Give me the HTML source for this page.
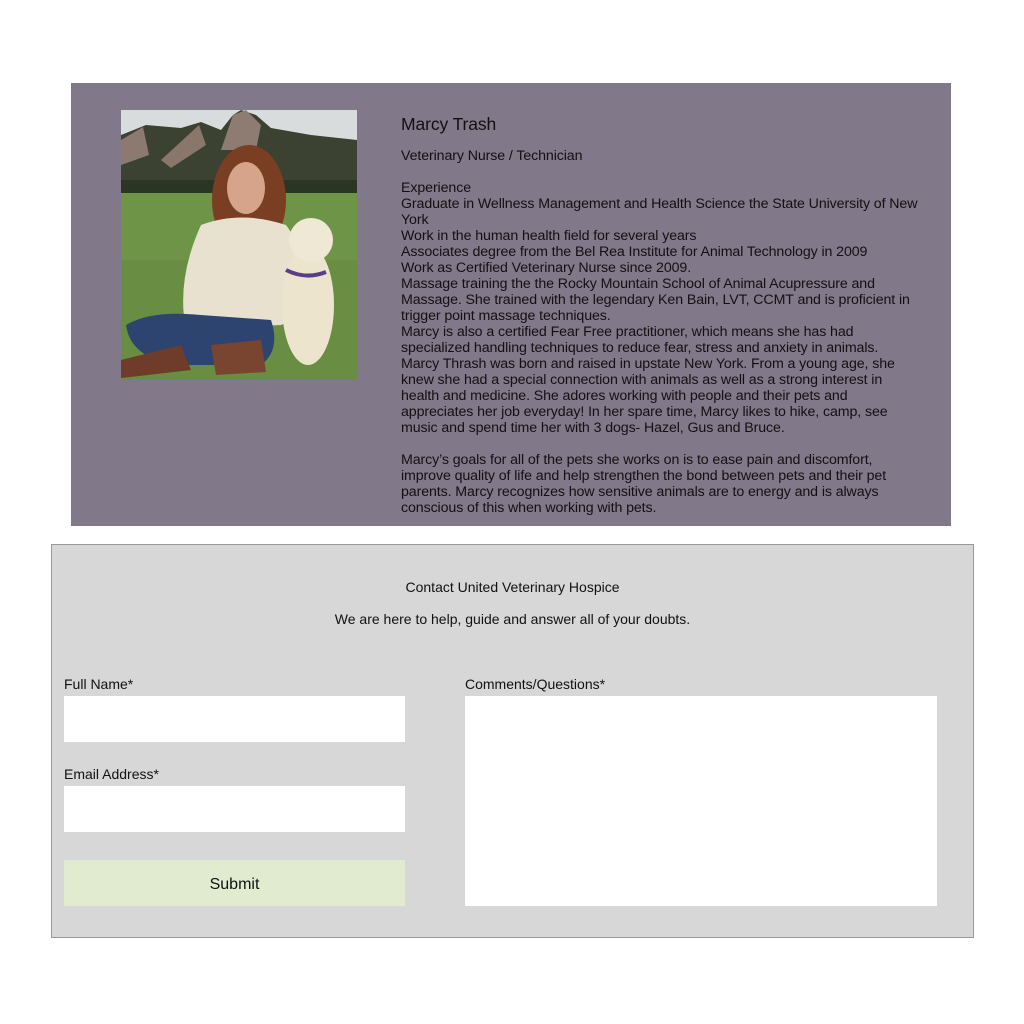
<!DOCTYPE html>
<html><head><meta charset="utf-8"><style>
body{margin:0;background:#fff;width:1024px;height:1024px;position:relative;font-family:"Liberation Sans",sans-serif;color:#111;}
.panel{position:absolute;left:71px;top:83px;width:880px;height:443px;background:#817889;}
.photo{position:absolute;left:50px;top:27px;width:236px;height:270px;}
.txt{position:absolute;left:330px;top:31px;font-size:14.2px;line-height:16px;white-space:nowrap;letter-spacing:-0.1px;}
.txt h1{font-size:17.5px;font-weight:normal;margin:0 0 14px;line-height:20px;}
.form{position:absolute;left:51px;top:544px;width:921px;height:392px;background:#d7d7d7;border:1px solid #999;}
.c{position:absolute;width:100%;text-align:center;font-size:14px;}
.lbl{position:absolute;font-size:14px;}
.in{position:absolute;background:#fff;}
.btn{position:absolute;left:12px;top:315px;width:341px;height:46px;background:#e0ebd0;text-align:center;line-height:50px;font-size:16px;}
</style></head><body>
<div class="panel">
<svg class="photo" viewBox="0 0 236 270" preserveAspectRatio="none">
<rect width="236" height="270" fill="#6f8a45"/>
<rect width="236" height="40" fill="#d8dcdc"/>
<polygon points="0,25 25,15 60,18 80,12 100,20 112,5 120,0 135,5 150,18 190,25 236,30 236,83 0,83" fill="#3b4232"/>
<polygon points="0,30 22,17 28,45 0,55" fill="#8c7a70"/>
<polygon points="40,50 78,15 85,35 50,58" fill="#8a776c"/>
<polygon points="100,40 112,5 125,0 140,15 135,40" fill="#8e7c72"/>
<rect y="70" width="236" height="13" fill="#2a3524"/>
<rect y="83" width="236" height="187" fill="#6e9448"/>
<rect y="150" width="236" height="120" fill="#668a40" opacity=".7"/>
<ellipse cx="128" cy="90" rx="37" ry="55" fill="#7a3e22"/>
<ellipse cx="125" cy="78" rx="19" ry="26" fill="#d6a48a"/>
<path d="M80,115 Q120,100 165,115 L210,180 L195,200 L160,215 L65,220 Q55,170 80,115Z" fill="#e9e1cf"/>
<path d="M5,215 Q30,200 80,205 L150,210 Q160,240 140,255 L60,255 Q10,250 5,215Z" fill="#2d4470"/>
<path d="M0,250 L60,235 L70,260 L0,268Z" fill="#6e3c28"/>
<path d="M90,235 L140,230 L145,262 L95,265Z" fill="#7a4530"/>
<ellipse cx="187" cy="195" rx="26" ry="60" fill="#ece4cc"/>
<ellipse cx="190" cy="130" rx="22" ry="22" fill="#efe8d4"/>
<path d="M165,160 Q185,170 205,162" stroke="#5a3e8a" stroke-width="4" fill="none"/>
</svg>
<div class="txt"><h1>Marcy Trash</h1>Veterinary Nurse / Technician<br><br>Experience<br>Graduate in Wellness Management and Health Science the State University of New<br>York<br>Work in the human health field for several years<br>Associates degree from the Bel Rea Institute for Animal Technology in 2009<br>Work as Certified Veterinary Nurse since 2009.<br>Massage training the the Rocky Mountain School of Animal Acupressure and<br>Massage. She trained with the legendary Ken Bain, LVT, CCMT and is proficient in<br>trigger point massage techniques.<br>Marcy is also a certified Fear Free practitioner, which means she has had<br>specialized handling techniques to reduce fear, stress and anxiety in animals.<br>Marcy Thrash was born and raised in upstate New York. From a young age, she<br>knew she had a special connection with animals as well as a strong interest in<br>health and medicine. She adores working with people and their pets and<br>appreciates her job everyday! In her spare time, Marcy likes to hike, camp, see<br>music and spend time her with 3 dogs- Hazel, Gus and Bruce.<br><br>Marcy’s goals for all of the pets she works on is to ease pain and discomfort,<br>improve quality of life and help strengthen the bond between pets and their pet<br>parents. Marcy recognizes how sensitive animals are to energy and is always<br>conscious of this when working with pets.</div>
</div>
<div class="form">
<div class="c" style="top:34px">Contact United Veterinary Hospice</div>
<div class="c" style="top:66px">We are here to help, guide and answer all of your doubts.</div>
<div class="lbl" style="left:12px;top:131px">Full Name*</div>
<div class="in" style="left:12px;top:151px;width:341px;height:46px"></div>
<div class="lbl" style="left:12px;top:221px">Email Address*</div>
<div class="in" style="left:12px;top:241px;width:341px;height:46px"></div>
<div class="btn">Submit</div>
<div class="lbl" style="left:413px;top:131px">Comments/Questions*</div>
<div class="in" style="left:413px;top:151px;width:472px;height:210px"></div>
</div>
</body></html>
